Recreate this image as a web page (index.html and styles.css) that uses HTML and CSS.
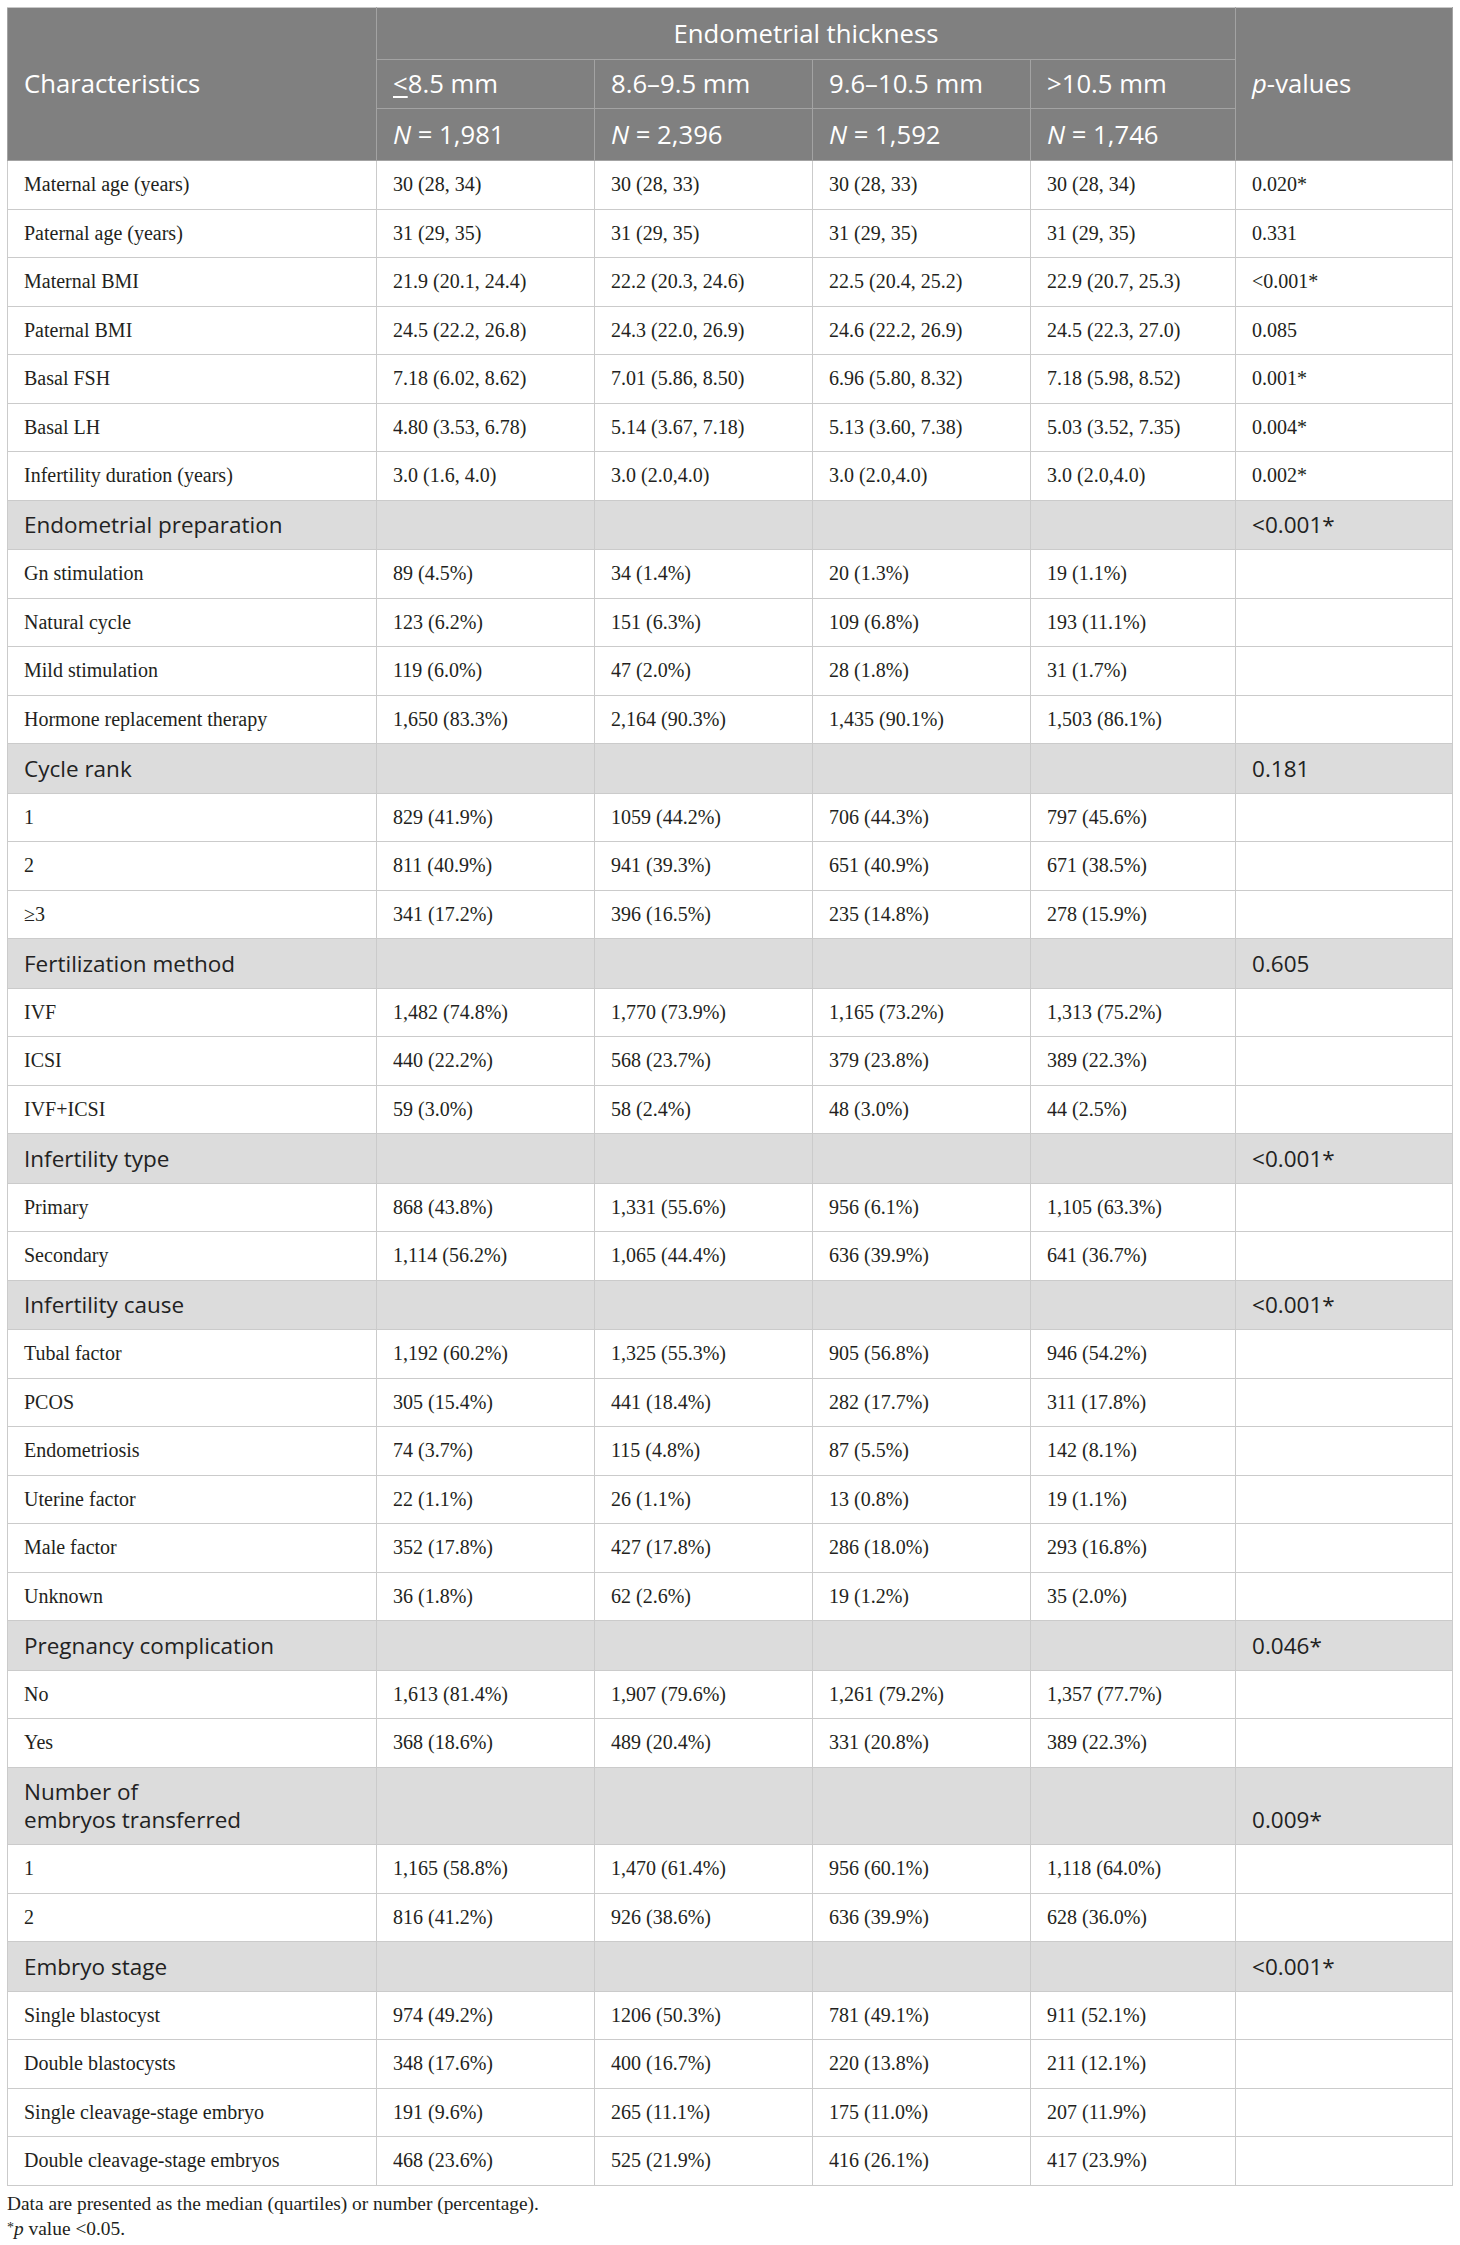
FILE: index.html
```html
<!DOCTYPE html>
<html lang="en">
<head>
<meta charset="utf-8">
<title>Endometrial thickness table</title>
<link rel="stylesheet" href="styles.css">
</head>
<body>
<div class="page">
<table class="tbl">
<colgroup>
<col class="c-label"><col class="c-num"><col class="c-num"><col class="c-num"><col class="c-num4"><col class="c-p">
</colgroup>
<thead>
<tr class="h1">
<th rowspan="3" class="mid">Characteristics</th>
<th colspan="4" class="center">Endometrial thickness</th>
<th rowspan="3" class="mid"><i>p</i>-values</th>
</tr>
<tr class="h2">
<th><span class="u">&lt;</span>8.5 mm</th>
<th>8.6–9.5 mm</th>
<th>9.6–10.5 mm</th>
<th>&gt;10.5 mm</th>
</tr>
<tr class="h3">
<th><i>N</i> = 1,981</th>
<th><i>N</i> = 2,396</th>
<th><i>N</i> = 1,592</th>
<th><i>N</i> = 1,746</th>
</tr>
</thead>
<tbody>
<tr><td>Maternal age (years)</td><td>30 (28, 34)</td><td>30 (28, 33)</td><td>30 (28, 33)</td><td>30 (28, 34)</td><td>0.020*</td></tr>
<tr><td>Paternal age (years)</td><td>31 (29, 35)</td><td>31 (29, 35)</td><td>31 (29, 35)</td><td>31 (29, 35)</td><td>0.331</td></tr>
<tr><td>Maternal BMI</td><td>21.9 (20.1, 24.4)</td><td>22.2 (20.3, 24.6)</td><td>22.5 (20.4, 25.2)</td><td>22.9 (20.7, 25.3)</td><td>&lt;0.001*</td></tr>
<tr><td>Paternal BMI</td><td>24.5 (22.2, 26.8)</td><td>24.3 (22.0, 26.9)</td><td>24.6 (22.2, 26.9)</td><td>24.5 (22.3, 27.0)</td><td>0.085</td></tr>
<tr><td>Basal FSH</td><td>7.18 (6.02, 8.62)</td><td>7.01 (5.86, 8.50)</td><td>6.96 (5.80, 8.32)</td><td>7.18 (5.98, 8.52)</td><td>0.001*</td></tr>
<tr><td>Basal LH</td><td>4.80 (3.53, 6.78)</td><td>5.14 (3.67, 7.18)</td><td>5.13 (3.60, 7.38)</td><td>5.03 (3.52, 7.35)</td><td>0.004*</td></tr>
<tr><td>Infertility duration (years)</td><td>3.0 (1.6, 4.0)</td><td>3.0 (2.0,4.0)</td><td>3.0 (2.0,4.0)</td><td>3.0 (2.0,4.0)</td><td>0.002*</td></tr>

<tr class="sec"><td>Endometrial preparation</td><td></td><td></td><td></td><td></td><td>&lt;0.001*</td></tr>
<tr><td>Gn stimulation</td><td>89 (4.5%)</td><td>34 (1.4%)</td><td>20 (1.3%)</td><td>19 (1.1%)</td><td></td></tr>
<tr><td>Natural cycle</td><td>123 (6.2%)</td><td>151 (6.3%)</td><td>109 (6.8%)</td><td>193 (11.1%)</td><td></td></tr>
<tr><td>Mild stimulation</td><td>119 (6.0%)</td><td>47 (2.0%)</td><td>28 (1.8%)</td><td>31 (1.7%)</td><td></td></tr>
<tr><td>Hormone replacement therapy</td><td>1,650 (83.3%)</td><td>2,164 (90.3%)</td><td>1,435 (90.1%)</td><td>1,503 (86.1%)</td><td></td></tr>

<tr class="sec"><td>Cycle rank</td><td></td><td></td><td></td><td></td><td>0.181</td></tr>
<tr><td>1</td><td>829 (41.9%)</td><td>1059 (44.2%)</td><td>706 (44.3%)</td><td>797 (45.6%)</td><td></td></tr>
<tr><td>2</td><td>811 (40.9%)</td><td>941 (39.3%)</td><td>651 (40.9%)</td><td>671 (38.5%)</td><td></td></tr>
<tr><td>≥3</td><td>341 (17.2%)</td><td>396 (16.5%)</td><td>235 (14.8%)</td><td>278 (15.9%)</td><td></td></tr>

<tr class="sec"><td>Fertilization method</td><td></td><td></td><td></td><td></td><td>0.605</td></tr>
<tr><td>IVF</td><td>1,482 (74.8%)</td><td>1,770 (73.9%)</td><td>1,165 (73.2%)</td><td>1,313 (75.2%)</td><td></td></tr>
<tr><td>ICSI</td><td>440 (22.2%)</td><td>568 (23.7%)</td><td>379 (23.8%)</td><td>389 (22.3%)</td><td></td></tr>
<tr><td>IVF+ICSI</td><td>59 (3.0%)</td><td>58 (2.4%)</td><td>48 (3.0%)</td><td>44 (2.5%)</td><td></td></tr>

<tr class="sec"><td>Infertility type</td><td></td><td></td><td></td><td></td><td>&lt;0.001*</td></tr>
<tr><td>Primary</td><td>868 (43.8%)</td><td>1,331 (55.6%)</td><td>956 (6.1%)</td><td>1,105 (63.3%)</td><td></td></tr>
<tr><td>Secondary</td><td>1,114 (56.2%)</td><td>1,065 (44.4%)</td><td>636 (39.9%)</td><td>641 (36.7%)</td><td></td></tr>

<tr class="sec"><td>Infertility cause</td><td></td><td></td><td></td><td></td><td>&lt;0.001*</td></tr>
<tr><td>Tubal factor</td><td>1,192 (60.2%)</td><td>1,325 (55.3%)</td><td>905 (56.8%)</td><td>946 (54.2%)</td><td></td></tr>
<tr><td>PCOS</td><td>305 (15.4%)</td><td>441 (18.4%)</td><td>282 (17.7%)</td><td>311 (17.8%)</td><td></td></tr>
<tr><td>Endometriosis</td><td>74 (3.7%)</td><td>115 (4.8%)</td><td>87 (5.5%)</td><td>142 (8.1%)</td><td></td></tr>
<tr><td>Uterine factor</td><td>22 (1.1%)</td><td>26 (1.1%)</td><td>13 (0.8%)</td><td>19 (1.1%)</td><td></td></tr>
<tr><td>Male factor</td><td>352 (17.8%)</td><td>427 (17.8%)</td><td>286 (18.0%)</td><td>293 (16.8%)</td><td></td></tr>
<tr><td>Unknown</td><td>36 (1.8%)</td><td>62 (2.6%)</td><td>19 (1.2%)</td><td>35 (2.0%)</td><td></td></tr>

<tr class="sec"><td>Pregnancy complication</td><td></td><td></td><td></td><td></td><td>0.046*</td></tr>
<tr><td>No</td><td>1,613 (81.4%)</td><td>1,907 (79.6%)</td><td>1,261 (79.2%)</td><td>1,357 (77.7%)</td><td></td></tr>
<tr><td>Yes</td><td>368 (18.6%)</td><td>489 (20.4%)</td><td>331 (20.8%)</td><td>389 (22.3%)</td><td></td></tr>

<tr class="sec"><td>Number of<br>embryos transferred</td><td></td><td></td><td></td><td></td><td>0.009*</td></tr>
<tr><td>1</td><td>1,165 (58.8%)</td><td>1,470 (61.4%)</td><td>956 (60.1%)</td><td>1,118 (64.0%)</td><td></td></tr>
<tr><td>2</td><td>816 (41.2%)</td><td>926 (38.6%)</td><td>636 (39.9%)</td><td>628 (36.0%)</td><td></td></tr>

<tr class="sec"><td>Embryo stage</td><td></td><td></td><td></td><td></td><td>&lt;0.001*</td></tr>
<tr><td>Single blastocyst</td><td>974 (49.2%)</td><td>1206 (50.3%)</td><td>781 (49.1%)</td><td>911 (52.1%)</td><td></td></tr>
<tr><td>Double blastocysts</td><td>348 (17.6%)</td><td>400 (16.7%)</td><td>220 (13.8%)</td><td>211 (12.1%)</td><td></td></tr>
<tr><td>Single cleavage-stage embryo</td><td>191 (9.6%)</td><td>265 (11.1%)</td><td>175 (11.0%)</td><td>207 (11.9%)</td><td></td></tr>
<tr><td>Double cleavage-stage embryos</td><td>468 (23.6%)</td><td>525 (21.9%)</td><td>416 (26.1%)</td><td>417 (23.9%)</td><td></td></tr>
</tbody>
</table>
<div class="notes">
<p>Data are presented as the median (quartiles) or number (percentage).</p>
<p><span class="ast">*</span><i>p</i> value &lt;0.05.</p>
</div>
</div>
</body>
</html>
```

FILE: styles.css
```css
html, body {
  margin: 0;
  padding: 0;
  background: #ffffff;
}

.page {
  padding: 7px 8px 0 7px;
}

.tbl {
  border-collapse: collapse;
  table-layout: fixed;
  width: 1445px;
}

.c-label { width: 369px; }
.c-num { width: 218px; }
.c-num4 { width: 205px; }
.c-p { width: 217px; }

.tbl th {
  background: #808080;
  color: #ffffff;
  font-family: "Open Sans", "Noto Sans", sans-serif;
  font-size: 25.7px;
  line-height: 30px;
  font-weight: 400;
  text-align: left;
  padding: 10px 16px;
  border: 1px solid #a3a3a3;
  vertical-align: middle;
}

.tbl th.center {
  text-align: center;
}

.tbl .h1 th { padding-top: 10.5px; padding-bottom: 10.5px; }
.tbl .h2 th { padding-top: 9px; padding-bottom: 9px; }
.tbl .h3 th { padding-top: 11px; padding-bottom: 10px; }

.tbl thead tr:first-child th { border-top-color: #c8c8c8; }

.u {
  text-decoration: underline;
  text-underline-offset: 3px;
  text-decoration-thickness: 2px;
}

.tbl td {
  font-family: "Liberation Serif", "Times New Roman", serif;
  font-size: 20px;
  line-height: 23.5px;
  color: #231f20;
  padding: 12px 16px;
  border: 1px solid #cbcbcb;
  vertical-align: bottom;
  white-space: nowrap;
}

.tbl tr.sec td {
  background: #dcdcdc;
  font-family: "Open Sans", "Noto Sans", sans-serif;
  font-size: 22.5px;
  line-height: 28px;
  color: #222222;
  padding: 10.5px 16px 10px;
}

.notes {
  margin-top: 6px;
  font-family: "Liberation Serif", "Times New Roman", serif;
  font-size: 19.4px;
  line-height: 24px;
  color: #231f20;
}

.notes p {
  margin: 0;
}

.ast {
  font-size: 14px;
  vertical-align: 3px;
}
```
